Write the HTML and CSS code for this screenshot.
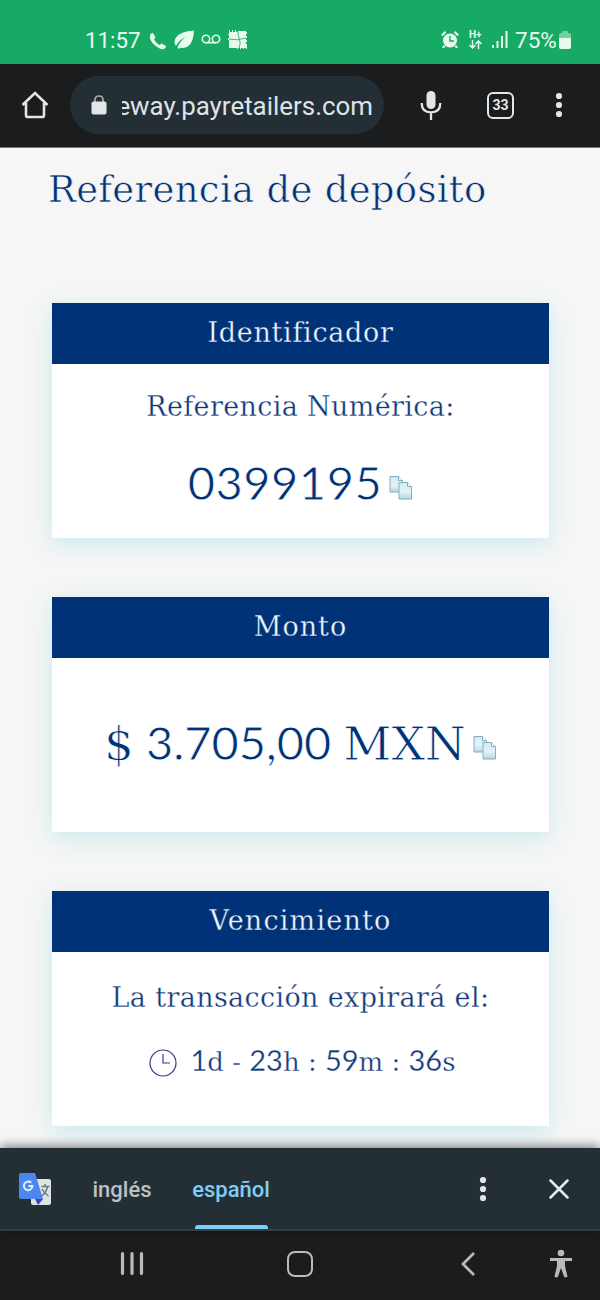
FILE: index.html
```html
<!DOCTYPE html>
<html lang="es">
<head>
<meta charset="utf-8">
<title>Referencia de depósito</title>
<link rel="stylesheet" href="styles.css">
</head>
<body>
<svg class="defs" width="0" height="0">
  <defs>
    <linearGradient id="sheet" x1="0" y1="0" x2="0" y2="1"><stop offset="0" stop-color="#d3e9f1"/><stop offset=".55" stop-color="#e4f3f8"/><stop offset="1" stop-color="#b5d8e5"/></linearGradient>
    <symbol id="copy" viewBox="0 0 24 25">
      <path d="M1 1.500h8.500l4 4v11.500h-12.500z" fill="url(#sheet)" stroke="#82afbf"/>
      <path d="M9.500 1.500v4h4" fill="#f5fbfd" stroke="#82afbf"/>
      <path d="M10 7.500h8.500l4 4v12.500h-12.500z" fill="url(#sheet)" stroke="#82afbf"/>
      <path d="M18.500 7.500v4h4" fill="#f5fbfd" stroke="#82afbf"/>
    </symbol>
  </defs>
</svg>
<div class="screen">
  <header class="status">
    <span class="time">11:57</span>
    <svg class="call" width="18" height="18" viewBox="0 0 18 18"><path d="M1 3Q2 .8 4 1l2.500 4.500L5 7.500Q7 11 10.500 13l2-1.600L17 14q.2 2-2 3-4 1-9.500-4T1 3z"/></svg>
    <svg class="leaf" width="21" height="20" viewBox="0 0 21 20"><path d="M20 .5Q6 1.500 2 7.500q-3 5 0 8.500 3-6 9.500-9Q6 11 3.500 17.500l1 1.500 2-1.500q5 2 9.500-3Q19.500 10 20 .5z"/></svg>
    <svg class="voicemail" width="20" height="11" viewBox="0 0 20 11"><g fill="none" stroke="#e6fbee" stroke-width="1.600"><circle cx="5" cy="5" r="3.700"/><circle cx="15" cy="5" r="3.700"/><path d="M5 8.700h10"/></g></svg>
    <svg class="mosaic" width="20" height="20" viewBox="0 0 20 20"><path d="M1 0h1v2h2V0h1v2h2V0h1v2h2V1h8v1h1v2h-1v2h1v2h-1v2h1v2h-1v2h1v5h-1v-1h-2v1h-1v-1h-2v1h-1v-1h-2v1h-1v-1H1v-8H0v-1h1V9H0V8h1V5H0V4h1z"/><path d="M10 2q0 4 1.500 7.500t-.5 9M1 9q8 2 17-1" fill="none" stroke="#16aa65" stroke-width=".8"/></svg>
    <span class="fill"></span>
    <svg class="alarm" width="18" height="18" viewBox="0 0 18 18"><path d="M2.500 14 1 17h2l1.500-1.500zm13 0L17 17h-2l-1.500-1.500z"/><circle cx="9" cy="9.500" r="7"/><path d="M.8 4.500 4.500.8M17.200 4.500 13.500.8" stroke="#e6fbee" stroke-width="2"/><path d="M9 5v5h4" fill="none" stroke="#16aa65" stroke-width="1.500"/></svg>
    <span class="network"><b>H+</b><svg width="13" height="9" viewBox="0 0 13 9"><path d="M3.500 0v8M.5 5l3 3 3-3M9.500 9V1M6.500 4l3-3 3 3" fill="none" stroke="#e6fbee" stroke-width="1.500"/></svg></span>
    <svg class="signal" width="16" height="17" viewBox="0 0 16 17"><path d="M0 14h2v3H0zM4.500 10h2v7h-2zM9 5h2v12H9zM13.500 0h2v17h-2z"/></svg>
    <span class="percent">75%</span>
    <svg class="battery" width="12" height="18" viewBox="0 0 12 18"><path d="M3 2V1q0-1 1-1h4q1 0 1 1v1h1q2 0 2 2v3H0V4q0-2 2-2z" opacity=".45"/><path d="M0 7h12v9q0 2-2 2H2q-2 0-2-2z"/></svg>
  </header>

  <nav class="browser">
    <svg class="home" width="28" height="28" viewBox="0 0 28 28"><path d="M1.500 14 14 2l12.500 12M5 12v12.200q0 1.800 1.800 1.800h14.400q1.800 0 1.800-1.800V12" fill="none" stroke="#e3e5e6" stroke-width="2.600"/></svg>
    <div class="address">
      <svg class="lock" width="16" height="20" viewBox="0 0 16 20"><path d="M4 8V5q0-4 4-4t4 4v3" fill="none" stroke="#a9adb0" stroke-width="1.700"/><rect x=".5" y="6.500" width="15" height="13" rx="2" fill="#e3e5e6"/></svg>
      <div class="url"><span>eway.payretailers.com</span></div>
    </div>
    <svg class="mic" width="22" height="31" viewBox="0 0 22 31"><rect x="6.500" y="1" width="9" height="18" rx="4.500" fill="#e3e5e6"/><path d="M1.700 13q0 9.300 9.300 9.300t9.300-9.300M11 22v8" fill="none" stroke="#e3e5e6" stroke-width="2.300"/></svg>
    <span class="tabs">33</span>
    <svg class="dots" width="8" height="26" viewBox="0 0 8 26"><circle cx="4" cy="4" r="3.100"/><circle cx="4" cy="13" r="3.100"/><circle cx="4" cy="22" r="3.100"/></svg>
  </nav>

  <main class="page">
    <h1>Referencia de depósito</h1>
    <section class="card">
      <h2 class="t-id">Identificador</h2>
      <p class="label">Referencia Numérica:</p>
      <p class="value"><span class="number">0399195</span><svg class="copy" width="24" height="25"><use href="#copy"/></svg></p>
    </section>
    <section class="card">
      <h2 class="t-amount">Monto</h2>
      <p class="value amount"><span class="number"><span class="slab">$</span> 3.705,00 <span class="slab">MXN</span></span><svg class="copy" width="24" height="25"><use href="#copy"/></svg></p>
    </section>
    <section class="card">
      <h2 class="t-due">Vencimiento</h2>
      <p class="label expiry">La transacción expirará el:</p>
      <p class="timer"><svg width="28" height="28" viewBox="0 0 28 28"><g fill="none" stroke="#393985" stroke-width="1.200"><circle cx="14" cy="14" r="13"/><path d="M14 5v9h7"/></g></svg><span class="count"><i>1</i>d - <i>23</i>h : <i>59</i>m : <i>36</i>s</span></p>
    </section>
  </main>

  <section class="translate">
    <svg class="gt" width="34" height="34" viewBox="0 0 34 34"><rect x="13" y="7" width="20" height="26" rx="2" fill="#dfe2e3"/><path d="M17 27h8l-5 6z" fill="#3547b5"/><path d="M3 1h14l8 26H3q-2 0-2-2V3q0-2 2-2z" fill="#4b87ee"/><path d="M23.500 14.500h8M27 12v2.500M29.500 15q-1.500 6-6 9M24 17q2 4 6.500 7" fill="none" stroke="#647980" stroke-width="1.400"/><path d="M13.200 10.800A4.300 4.300 0 1 0 14.500 14H10.500" fill="none" stroke="#e8f0fd" stroke-width="1.900"/></svg>
    <span class="lang english">inglés</span>
    <span class="lang spanish">español</span>
    <span class="fill"></span>
    <svg class="dots more" width="8" height="26" viewBox="0 0 8 26"><circle cx="4" cy="4" r="3.100"/><circle cx="4" cy="13" r="3.100"/><circle cx="4" cy="22" r="3.100"/></svg>
    <svg class="close" width="20" height="20" viewBox="0 0 20 20"><path d="M1.500 1.500l17 17m0-17-17 17" stroke="#e4edf0" stroke-width="2.500" stroke-linecap="round"/></svg>
  </section>

  <footer class="system">
    <svg class="recents" width="24" height="26" viewBox="0 0 24 26"><path d="M2.500 2.500v20M12 2.500v20M21.500 2.500v20" stroke="#b9babb" stroke-width="3.200" stroke-linecap="round"/></svg>
    <span class="home-key"></span>
    <svg class="back" width="16" height="26" viewBox="0 0 16 26"><path d="M14 2 3 13 14 24" fill="none" stroke="#b9babb" stroke-width="2.800"/></svg>
    <svg class="person" width="24" height="30" viewBox="0 0 24 30"><circle cx="12" cy="4" r="3.300"/><path d="M1 9h22v3h-7v5l2.500 10.500q-2 2-3.500 0L12 19 9 27.500q-1.500 2-3.500 0L8 17v-5H1z"/></svg>
  </footer>
</div>
</body>
</html>
```
FILE: styles.css
```css
* { box-sizing: border-box; }
body { margin: 0; font-family: Roboto, "Liberation Sans", sans-serif; }
svg { display: block; flex: none; }
.defs { position: absolute; }
h1, h2, p { margin: 0; font-weight: 400; }
.fill { flex: 1; }
.screen { width: 600px; height: 1300px; overflow: hidden; display: flex; flex-direction: column; background: #f6f6f6; }

.status { flex: none; height: 64px; padding: 15px 29px 0 85px; display: flex; align-items: center; background: #16aa65; color: #e6fbee; fill: #e6fbee; font-size: 23px; line-height: 48px; }
.time { width: 64px; font-size: 22.300px; }
.call { margin-top: 2px; }
.leaf { margin-left: 7px; }
.voicemail { margin-left: 6px; }
.mosaic { margin-left: 7px; }
.alarm { margin-right: 10px; }
.network { width: 24px; height: 20px; display: flex; flex-direction: column; }
.network b { font-size: 10px; line-height: 10px; }
.signal { margin-left: -1px; }
.percent { margin-left: 7px; width: 43px; font-size: 22.500px; white-space: nowrap; }
.battery { margin-left: 1px; }

.browser { flex: none; height: 83px; padding: 0 37px 1px 21px; display: flex; align-items: center; background: #1a1c1e; }
.address { width: 314px; height: 58px; margin-left: 21px; padding-left: 21px; border-radius: 29px; background: #242f35; display: flex; align-items: center; }
.url { width: 251px; margin-left: 15px; padding-top: 2px; overflow: hidden; display: flex; justify-content: flex-end; color: #dfe3e5; font-size: 25.900px; line-height: 34px; white-space: nowrap; }
.mic { margin-left: 36px; }
.tabs { width: 27px; height: 27px; margin-left: 45px; border: 2.800px solid #e3e5e6; border-radius: 6px; color: #e3e5e6; font-size: 14px; font-weight: 700; line-height: 23px; text-align: center; }
.dots { fill: #e3e5e6; }
.browser .dots { margin-left: 41px; }

.page { flex: none; height: 1001px; padding: 18px 51px 0 52px; overflow: hidden; color: #003278; font-family: "DejaVu Serif", "Liberation Serif", serif; border-top: 1px solid #777; }
h1 { height: 79px; margin-left: -4px; margin-bottom: 58px; font-size: 37px; line-height: 48px; letter-spacing: .3px; white-space: nowrap; -webkit-text-stroke: .6px #f6f6f6; }
.card { height: 235px; margin-bottom: 59px; background: #fff; box-shadow: 0 6px 22px rgba(150, 220, 225, .45); text-align: center; }
.card h2 { height: 61px; background: #003278; color: #eef5fb; font-size: 27px; line-height: 59px; -webkit-text-stroke: .3px #003278; }
.card .t-id { letter-spacing: .7px; }
.card .t-amount { letter-spacing: 1px; }
.card .t-due { letter-spacing: 1.200px; }
.label { padding-top: 24px; font-size: 27px; line-height: 38px; letter-spacing: .35px; white-space: nowrap; color: #10387a; -webkit-text-stroke: .3px #fff; }
.expiry { padding-top: 27px; }
.value { margin-top: 26px; display: flex; justify-content: center; align-items: center; }
.expiry + .timer { margin-top: 24px; }
.number { font-family: Lato, "Liberation Sans", sans-serif; font-size: 47px; line-height: 60px; letter-spacing: .5px; white-space: nowrap; -webkit-text-stroke: .8px #fff; }
.copy { margin: 10px 0 0 7px; }
.amount { margin-top: 54px; }
.amount .number { letter-spacing: 0; }
.slab { font-family: "DejaVu Serif", serif; font-size: 47px; line-height: 50px; }
.timer { display: flex; justify-content: center; align-items: center; color: #10387a; font-size: 26px; line-height: 38px; -webkit-text-stroke: .3px #fff; }
.timer svg { margin: 4px 13px 0 4px; }
.count { white-space: nowrap; }
.count i { font-family: Lato, sans-serif; font-size: 29px; font-style: normal; }

.translate { flex: none; height: 83px; padding: 0 31px 0 18px; display: flex; align-items: center; background: #242f35; border-bottom: 2px solid #353e43; box-shadow: 0 -2px 10px rgba(0, 0, 0, .5); position: relative; }
.lang { height: 81px; font-size: 22px; font-weight: 500; line-height: 84px; text-align: center; white-space: nowrap; }
.english { margin-left: 40px; width: 60px; color: #bbc1c5; }
.spanish { margin-left: 39px; width: 80px; color: #80cdf6; display: flex; flex-direction: column; align-items: center; }
.spanish::after { content: ""; flex: none; width: 73px; height: 4px; margin-top: -7px; border-radius: 3px 3px 0 0; background: #80cdf6; }
.more { margin-right: 62px; }

.system { flex: 1; padding: 0 27px 4px 120px; display: flex; align-items: center; background: #1a1c1e; fill: #b9babb; }
.home-key { width: 26px; height: 26px; margin-left: 143px; border: 2.800px solid #b9babb; border-radius: 8px; }
.back { margin-left: 147px; }
.person { margin-left: 73px; }
```
